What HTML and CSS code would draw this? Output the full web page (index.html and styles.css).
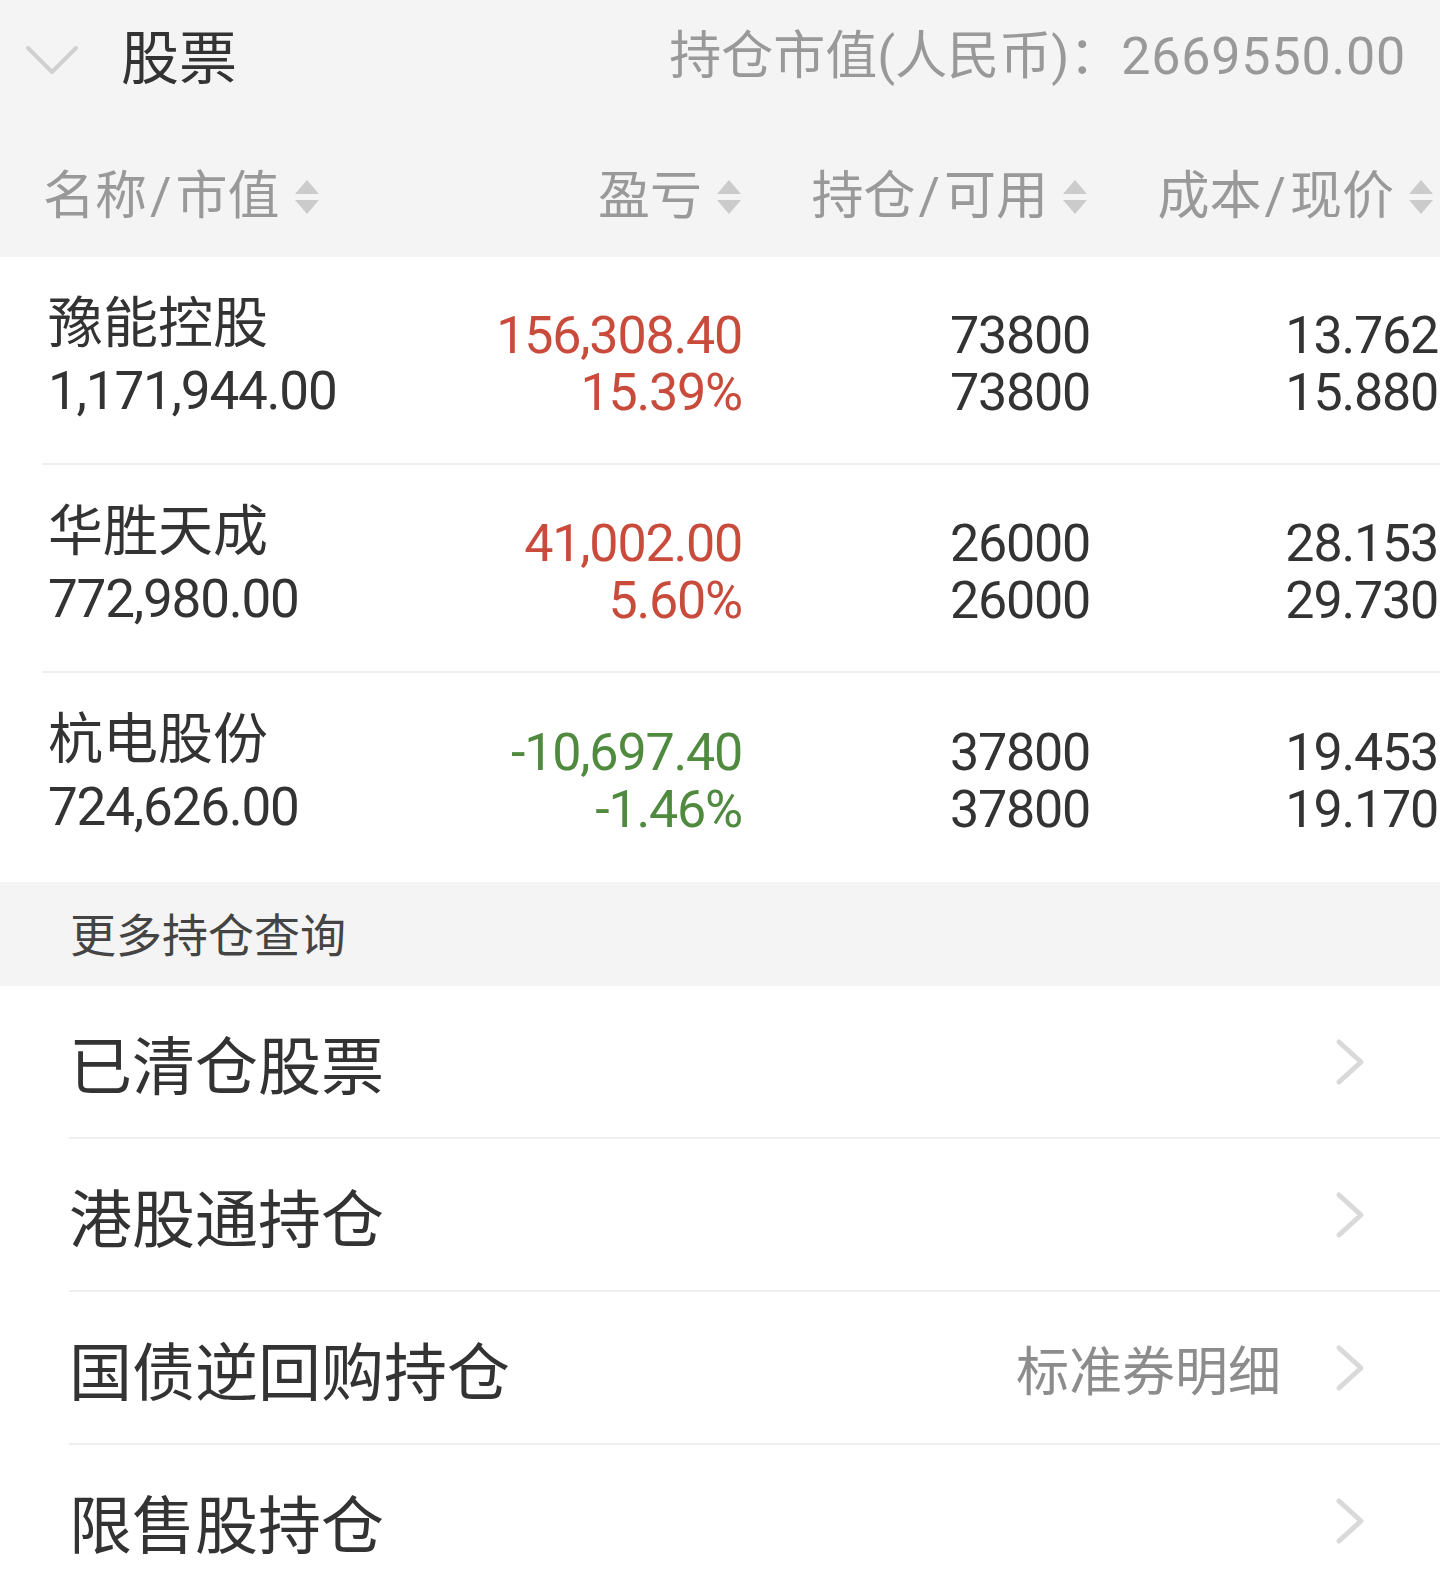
FILE: index.html
```html
<!DOCTYPE html>
<html lang="zh-CN">
<head>
<meta charset="utf-8">
<title>股票持仓</title>
<link rel="stylesheet" href="styles.css">
</head>
<body>
<div class="page">
  <header class="panel-head">
    <div class="title-row">
      <svg class="fold" width="54" height="32" viewBox="0 0 54 32"><polyline points="3,4 27,28 51,4" fill="none" stroke="#d0d0d0" stroke-width="4" stroke-linecap="round" stroke-linejoin="round"/></svg>
      <span class="title">股票</span>
      <span class="total">持仓市值(人民币)：<span class="total-num">2669550.00</span></span>
    </div>
    <div class="col-head">
      <div class="ch ch-left">名称<span class="sl">/</span>市值<svg class="sort" width="24" height="34" viewBox="0 0 24 34"><polygon points="12,0 24,14 0,14" fill="#cbcbcb"/><polygon points="0,20 24,20 12,34" fill="#cbcbcb"/></svg></div>
      <div class="ch">盈亏<svg class="sort" width="24" height="34" viewBox="0 0 24 34"><polygon points="12,0 24,14 0,14" fill="#cbcbcb"/><polygon points="0,20 24,20 12,34" fill="#cbcbcb"/></svg></div>
      <div class="ch">持仓<span class="sl">/</span>可用<svg class="sort" width="24" height="34" viewBox="0 0 24 34"><polygon points="12,0 24,14 0,14" fill="#cbcbcb"/><polygon points="0,20 24,20 12,34" fill="#cbcbcb"/></svg></div>
      <div class="ch">成本<span class="sl">/</span>现价<svg class="sort" width="24" height="34" viewBox="0 0 24 34"><polygon points="12,0 24,14 0,14" fill="#cbcbcb"/><polygon points="0,20 24,20 12,34" fill="#cbcbcb"/></svg></div>
    </div>
  </header>

  <section class="holdings">
    <div class="row">
      <div class="cell name-cell"><div class="name">豫能控股</div><div class="num">1,171,944.00</div></div>
      <div class="cell num-cell up"><div>156,308.40</div><div>15.39%</div></div>
      <div class="cell num-cell"><div>73800</div><div>73800</div></div>
      <div class="cell num-cell"><div>13.762</div><div>15.880</div></div>
    </div>
    <div class="row">
      <div class="cell name-cell"><div class="name">华胜天成</div><div class="num">772,980.00</div></div>
      <div class="cell num-cell up"><div>41,002.00</div><div>5.60%</div></div>
      <div class="cell num-cell"><div>26000</div><div>26000</div></div>
      <div class="cell num-cell"><div>28.153</div><div>29.730</div></div>
    </div>
    <div class="row row-last">
      <div class="cell name-cell"><div class="name">杭电股份</div><div class="num">724,626.00</div></div>
      <div class="cell num-cell down"><div>-10,697.40</div><div>-1.46%</div></div>
      <div class="cell num-cell"><div>37800</div><div>37800</div></div>
      <div class="cell num-cell"><div>19.453</div><div>19.170</div></div>
    </div>
  </section>

  <div class="more-title">更多持仓查询</div>

  <ul class="links">
    <li class="link"><span class="link-text">已清仓股票</span><svg class="arrow" width="32" height="50" viewBox="0 0 32 50"><polyline points="5,5 27,25 5,45" fill="none" stroke="#d9d9d9" stroke-width="5" stroke-linecap="round" stroke-linejoin="round"/></svg></li>
    <li class="link"><span class="link-text">港股通持仓</span><svg class="arrow" width="32" height="50" viewBox="0 0 32 50"><polyline points="5,5 27,25 5,45" fill="none" stroke="#d9d9d9" stroke-width="5" stroke-linecap="round" stroke-linejoin="round"/></svg></li>
    <li class="link"><span class="link-text">国债逆回购持仓</span><span class="link-extra">标准券明细</span><svg class="arrow" width="32" height="50" viewBox="0 0 32 50"><polyline points="5,5 27,25 5,45" fill="none" stroke="#d9d9d9" stroke-width="5" stroke-linecap="round" stroke-linejoin="round"/></svg></li>
    <li class="link"><span class="link-text">限售股持仓</span><svg class="arrow" width="32" height="50" viewBox="0 0 32 50"><polyline points="5,5 27,25 5,45" fill="none" stroke="#d9d9d9" stroke-width="5" stroke-linecap="round" stroke-linejoin="round"/></svg></li>
  </ul>
</div>
</body>
</html>
```

FILE: styles.css
```css
* { box-sizing: border-box; }

html, body {
  margin: 0;
  padding: 0;
  background: #ffffff;
}

body {
  font-family: Roboto, "Noto Sans CJK SC", sans-serif;
  color: #333333;
  width: 1440px;
  overflow: hidden;
}

.page {
  width: 1440px;
}

/* ---------- header ---------- */
.panel-head {
  background: #f4f4f4;
  height: 257px;
}

.title-row {
  height: 114px;
  display: flex;
  align-items: center;
  padding: 0 34px 0 25px;
}

.fold {
  display: block;
  margin-top: 6px;
  flex: none;
}

.title {
  font-family: "Noto Sans CJK SC", sans-serif;
  font-size: 58px;
  line-height: 70px;
  color: #333333;
  margin-left: 42px;
  margin-bottom: 6px;
}

.total {
  margin-left: auto;
  font-size: 52px;
  line-height: 70px;
  color: #999999;
  white-space: nowrap;
}

.total-num {
  letter-spacing: 0.8px;
}

.col-head {
  height: 143px;
  padding: 23px 0 0 43px;
  display: grid;
  grid-template-columns: 352px 346px 346px 346px;
  align-items: center;
}

.ch {
  display: flex;
  align-items: center;
  justify-content: flex-end;
  font-size: 52px;
  line-height: 70px;
  color: #999999;
  white-space: nowrap;
}

.ch-left {
  justify-content: flex-start;
}

.sl {
  margin: 0 4px 0 3px;
}

.sort {
  display: block;
  margin-left: 15px;
  flex: none;
}

/* ---------- holdings ---------- */
.holdings {
  background: #ffffff;
}

.row {
  margin-left: 42px;
  padding: 0 2px 0 6px;
  height: 208px;
  border-bottom: 2px solid #efefef;
  display: grid;
  grid-template-columns: 346px 348px 348px 348px;
  align-items: center;
}

.row-last {
  height: 209px;
  border-bottom: 0;
}

.cell {
  white-space: nowrap;
}

.name-cell {
  align-self: start;
  padding-top: 29px;
}

.name {
  font-family: "Noto Sans CJK SC", sans-serif;
  font-size: 55px;
  line-height: 64px;
  color: #333333;
}

.num {
  margin-top: 9px;
  font-size: 53px;
  line-height: 64px;
  letter-spacing: -1.2px;
  color: #333333;
}

.num-cell {
  padding-top: 7px;
  text-align: right;
  font-size: 52px;
  line-height: 57px;
  letter-spacing: -1.2px;
  color: #333333;
}

.num-cell.up {
  color: #c94b3c;
}

.num-cell.down {
  color: #4f8a3f;
}

/* ---------- more section ---------- */
.more-title {
  background: #f4f4f4;
  height: 104px;
  padding: 0 0 4px 70px;
  display: flex;
  align-items: center;
  font-family: "Noto Sans CJK SC", sans-serif;
  font-size: 46px;
  color: #444444;
}

.links {
  list-style: none;
  margin: 0;
  padding: 0;
}

.link {
  margin-left: 69px;
  height: 153px;
  padding: 0 74px 0 0;
  border-bottom: 2px solid #efefef;
  display: flex;
  align-items: center;
  font-family: "Noto Sans CJK SC", sans-serif;
}

.link-text {
  font-size: 63px;
  color: #333333;
  white-space: nowrap;
}

.link-extra {
  margin-left: auto;
  font-size: 53px;
  color: #8c8c8c;
  white-space: nowrap;
}

.arrow {
  display: block;
  margin-left: auto;
  flex: none;
}

.link-extra + .arrow {
  margin-left: 53px;
}
```
